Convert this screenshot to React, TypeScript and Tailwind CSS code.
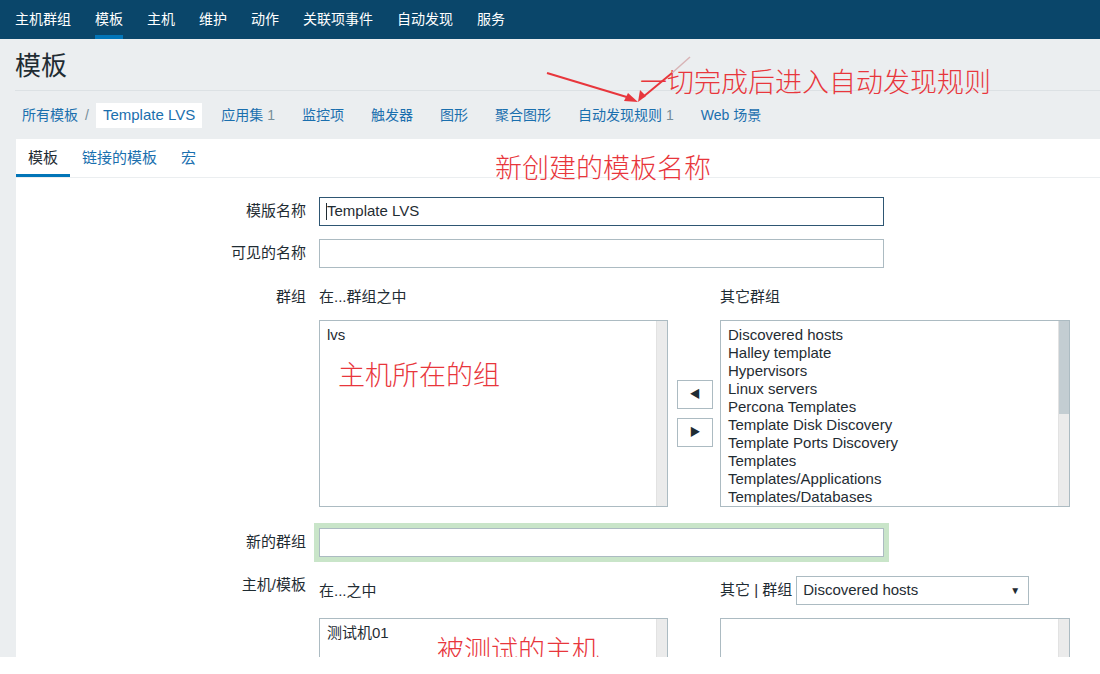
import React from 'react';

const navItems = ['主机群组', '模板', '主机', '维护', '动作', '关联项事件', '自动发现', '服务'];

const crumbs: { label: string; count?: string }[] = [
  { label: '应用集', count: '1' },
  { label: '监控项' },
  { label: '触发器' },
  { label: '图形' },
  { label: '聚合图形' },
  { label: '自动发现规则', count: '1' },
  { label: 'Web 场景' },
];

const otherGroups = [
  'Discovered hosts',
  'Halley template',
  'Hypervisors',
  'Linux servers',
  'Percona Templates',
  'Template Disk Discovery',
  'Template Ports Discovery',
  'Templates',
  'Templates/Applications',
  'Templates/Databases',
];

function ListBox({ items, width, height, thumb }: { items: string[]; width: string; height: string; thumb?: boolean }) {
  return (
    <div className={`${width} ${height} border border-[#acbbc2] bg-white flex shrink-0`}>
      <div className="flex-1 pl-[7px] pt-[5px] leading-[18px] text-[15px] text-[#1f2c33] overflow-hidden">
        {items.map(i => (
          <div key={i} className="whitespace-nowrap">{i}</div>
        ))}
      </div>
      <div className="w-[11px] bg-[#ebebeb] border-l border-[#e2e2e2] flex flex-col">
        {thumb && <div className="h-[93px] bg-[#c3cdd2]" />}
      </div>
    </div>
  );
}

function Label({ children, className = '' }: { children: React.ReactNode; className?: string }) {
  return <div className={`w-[290px] shrink-0 text-right text-[15px] text-[#1f2c33] ${className}`}>{children}</div>;
}

export default function App() {
  return (
    <div className="w-[1100px] h-[674px] bg-white overflow-hidden font-['Liberation_Sans','Noto_Sans_CJK_SC',sans-serif]">
      <div className="relative h-[657px] bg-[#ebeef0] overflow-hidden flex flex-col">
        {/* top menu */}
        <div className="h-[39px] bg-[#0a466a] flex pl-[3px] shrink-0">
          {navItems.map(n => (
            <div key={n} className="relative h-full px-3 flex items-center text-[14px] text-white">
              {n}
              {n === '模板' && <span className="absolute bottom-0 left-3 right-3 h-[4px] bg-[#0275b8]" />}
            </div>
          ))}
        </div>

        {/* header */}
        <div className="h-[51px] pl-[15px] flex items-center shrink-0">
          <h1 className="text-[26px] text-[#1f2c33] pt-[4px]">模板</h1>
        </div>
        <div className="ml-[15px] h-px bg-[#dce1e4] shrink-0" />
        <div className="h-[48px] flex items-center pl-[22px] text-[14px] shrink-0">
          <span className="text-[#1a6fae]">所有模板</span>
          <span className="text-[#768d99] mx-[7px]">/</span>
          <span className="bg-white h-[25px] px-[7px] flex items-center text-[15px] text-[#1a6fae]">Template LVS</span>
          <div className="flex gap-[27px] ml-[19px]">
            {crumbs.map(c => (
              <span key={c.label} className="text-[#1a6fae]">
                {c.label}
                {c.count && <span className="text-[#768d99] ml-[4px]">{c.count}</span>}
              </span>
            ))}
          </div>
        </div>

        {/* content */}
        <div className="flex-1 ml-[16px] bg-white flex flex-col">
          <div className="h-[39px] border-b border-[#ebeef0] flex shrink-0">
            <div className="h-full px-3 flex items-center text-[15px] text-[#1f2c33] border-b-[3px] border-[#0275b8] pt-[3px] -mb-px">模板</div>
            <div className="h-full px-3 flex items-center text-[15px] text-[#1a6fae]">链接的模板</div>
            <div className="h-full px-3 flex items-center text-[15px] text-[#1a6fae]">宏</div>
          </div>

          <div className="pt-[19px] flex flex-col">
            <div className="flex items-center">
              <Label>模版名称</Label>
              <div className="ml-[13px] w-[565px] h-[29px] border border-[#2e5673] flex items-center px-[6px] text-[15px] text-[#1f2c33]">
                <span className="w-px h-[17px] bg-[#1f2c33]" />Template LVS
              </div>
            </div>

            <div className="flex items-center mt-[13px]">
              <Label>可见的名称</Label>
              <div className="ml-[13px] w-[565px] h-[29px] border border-[#acbbc2]" />
            </div>

            <div className="flex mt-[19px]">
              <Label className="leading-[20px]">群组</Label>
              <div className="ml-[13px] flex flex-col">
                <div className="h-[20px] flex text-[15px] leading-[20px] text-[#1f2c33]">
                  <div className="w-[349px]">在...群组之中</div>
                  <div className="ml-[52px]">其它群组</div>
                </div>
                <div className="mt-[13px] flex items-center">
                  <ListBox items={['lvs']} width="w-[349px]" height="h-[187px]" />
                  <div className="ml-[9px] flex flex-col gap-[9px]">
                    <button className="w-[36px] h-[29px] border border-[#acbbc2] bg-white flex items-center justify-center text-[11px] text-[#1f2c33]">◀</button>
                    <button className="w-[36px] h-[29px] border border-[#acbbc2] bg-white flex items-center justify-center text-[11px] text-[#1f2c33]">▶</button>
                  </div>
                  <div className="ml-[7px]">
                    <ListBox items={otherGroups} width="w-[350px]" height="h-[187px]" thumb />
                  </div>
                </div>
              </div>
            </div>

            <div className="flex items-center mt-[21px]">
              <Label>新的群组</Label>
              <div className="ml-[13px] w-[565px] h-[29px] border border-[#acbbc2] shadow-[0_0_0_5px_#c9e5c9]" />
            </div>

            <div className="flex mt-[19px]">
              <Label className="leading-[18px]">主机/模板</Label>
              <div className="ml-[13px] flex flex-col">
                <div className="h-[29px] flex items-center text-[15px] text-[#1f2c33]">
                  <div className="w-[349px] pt-[2px]">在...之中</div>
                  <div className="ml-[52px] flex items-center">
                    <span>其它 | 群组</span>
                    <div className="ml-[4px] w-[233px] h-[29px] border border-[#acbbc2] bg-white flex items-center justify-between pl-[6px] pr-[8px]">
                      <span>Discovered hosts</span>
                      <span className="text-[10px]">▼</span>
                    </div>
                  </div>
                </div>
                <div className="mt-[13px] flex">
                  <ListBox items={['测试机01']} width="w-[349px]" height="h-[100px]" />
                  <div className="ml-[52px]">
                    <ListBox items={[]} width="w-[350px]" height="h-[100px]" />
                  </div>
                </div>
              </div>
            </div>
          </div>
        </div>

        {/* annotations */}
        <div className="absolute left-[640px] top-[66px] text-[27px] leading-[30px] text-[#e8363c] whitespace-nowrap font-['Noto_Sans_CJK_SC',sans-serif] font-light">一切完成后进入自动发现规则</div>
        <div className="absolute left-[495px] top-[152px] text-[27px] leading-[30px] text-[#e8363c] whitespace-nowrap font-['Noto_Sans_CJK_SC',sans-serif] font-light">新创建的模板名称</div>
        <div className="absolute left-[338px] top-[359px] text-[27px] leading-[30px] text-[#e8363c] whitespace-nowrap font-['Noto_Sans_CJK_SC',sans-serif] font-light">主机所在的组</div>
        <div className="absolute left-[437px] top-[634px] text-[27px] leading-[30px] text-[#e8363c] whitespace-nowrap font-['Noto_Sans_CJK_SC',sans-serif] font-light">被测试的主机</div>
        <svg className="absolute left-0 top-0 pointer-events-none" width="1100" height="200" viewBox="0 0 1100 200">
          <line x1="547" y1="73" x2="630" y2="98" stroke="#e8363c" strokeWidth="2" />
          <line x1="690" y1="57" x2="672" y2="73" stroke="#d8b4b6" strokeWidth="1.5" />
          <line x1="672" y1="73" x2="643" y2="97" stroke="#e8363c" strokeWidth="2" />
          <polygon points="638,102 624,101 628,93" fill="#e8363c" />
          <polygon points="638,102 640,90 646,96" fill="#e8363c" />
        </svg>
      </div>
    </div>
  );
}
